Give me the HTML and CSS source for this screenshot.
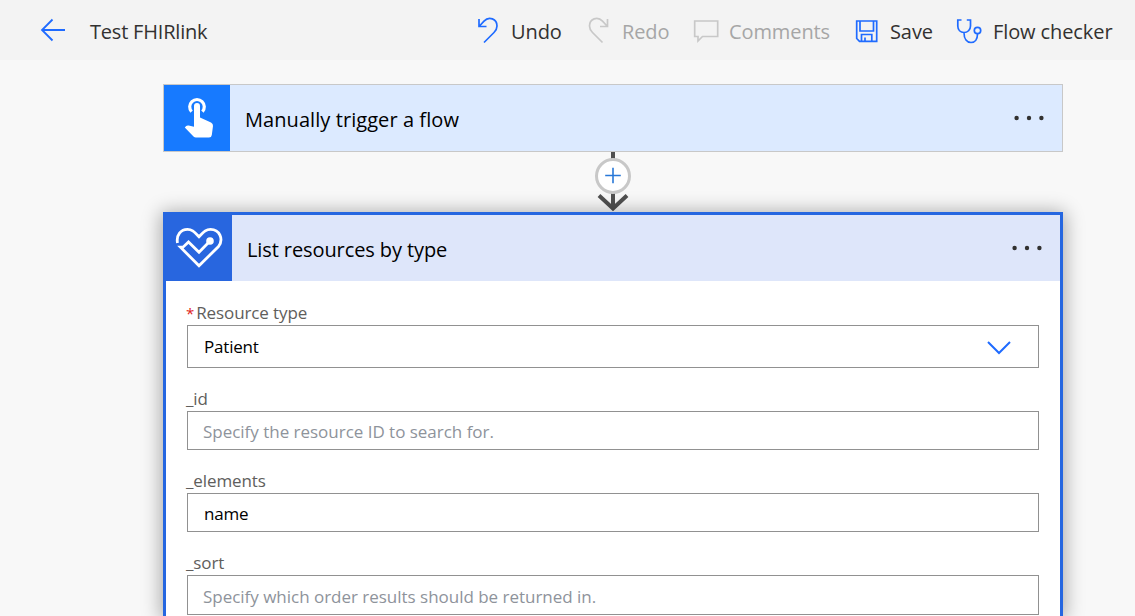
FILE: index.html
```html
<!DOCTYPE html>
<html lang="en">
<head>
    <meta charset="UTF-8">
    <meta name="viewport" content="width=device-width, initial-scale=1.0">
    <title>Test FHIRlink</title>
    <link rel="stylesheet" href="styles.css">
</head>
<body>
    <header class="topbar">
        <svg class="back-icon" width="26" height="24" viewBox="0 0 26 24">
            <path d="M25 12H2M12.500 1.500L2 12l10.500 10.500"/>
        </svg>
        <h1 class="flow-name">Test FHIRlink</h1>

        <nav class="toolbar">
            <div class="tool undo">
                <svg class="tool-icon" width="26" height="28" viewBox="0 0 26 28">
                    <path d="M2 3v7.500h7.500M2.500 10l4.500-4.800C12-.3 20 3 20 10c0 3-1.300 4.800-3 6.500L7 26.500"/>
                </svg>
                <span>Undo</span>
            </div>
            <div class="tool redo disabled">
                <svg class="tool-icon" width="26" height="28" viewBox="0 0 26 28">
                    <path d="M19.500 3v7.500H12M19 10l-4.500-4.800C9.500-.3 1.500 3 1.500 10c0 3 1.300 4.800 3 6.500l10 10"/>
                </svg>
                <span>Redo</span>
            </div>
            <div class="tool comments disabled">
                <svg class="tool-icon" width="26" height="28" viewBox="0 0 26 28">
                    <path d="M1.700 5h23v15.500H9.500L5 25v-4.500H1.700z"/>
                </svg>
                <span>Comments</span>
            </div>
            <div class="tool save">
                <svg class="tool-icon" width="26" height="28" viewBox="0 0 26 28">
                    <path d="M1.700 5h20v20.300H4.500L1.700 22.500zM5 5v10h13.500V5M6.500 25v-6.500h10.300V25M10 25v-3.500"/>
                </svg>
                <span>Save</span>
            </div>
            <div class="tool checker">
                <svg class="tool-icon" width="26" height="28" viewBox="0 0 26 28">
                    <path d="M5.500 4H1.800v6c0 4 2.700 6.500 6.200 6.500s6.500-2.500 6.500-6.500V4h-3.700M8 16.500c0 6.500 3 10 7 10s6.500-3.500 6.500-8.500"/>
                    <circle cx="21.500" cy="14.500" r="3.200"/>
                </svg>
                <span>Flow checker</span>
            </div>
        </nav>
    </header>

    <main class="canvas">
        <section class="card trigger">
            <div class="card-header">
                <div class="card-icon">
                    <svg width="66" height="66" viewBox="0 0 66 66">
                        <path class="touch-ring" d="M27.600 26.700a7.300 7.300 0 1 1 10.800 0"/>
                        <path class="touch-hand" d="M30 21a3 3 0 0 1 6 0V32.500l11 5q2.200 1 2 3.500l-1.200 9q-.3 2.500-2.800 2.500H32q-1.500 0-2.500-1L20.800 42.500l1.400-1.500q1-.9 2.500-.5l5.300 1.300z"/>
                    </svg>
                </div>
                <h2 class="card-title">Manually trigger a flow</h2>
                <svg class="dots" width="30" height="6" viewBox="0 0 30 6">
                    <circle cx="2.600" cy="3" r="2.200"/><circle cx="15" cy="3" r="2.200"/><circle cx="27.400" cy="3" r="2.200"/>
                </svg>
            </div>
        </section>

        <svg class="connector" width="40" height="60" viewBox="0 0 40 60">
            <path class="line" d="M20 0v56M6 43.500l14 13 14-13"/>
            <circle cx="20" cy="24" r="16.500"/>
            <path class="plus" d="M12.200 23.500h15.600M20 15.700v15.600"/>
        </svg>

        <section class="card action">
            <div class="card-header">
                <div class="card-icon">
                    <svg width="66" height="66" viewBox="0 0 66 66">
                        <path class="heart" d="M11.500 28c-1.500-8 3.500-13.700 10-13.700 4 0 6 1.500 11.500 7.500 5.500-6 7.500-7.500 11.500-7.500 9 0 13.500 9.700 8 17.200L33 50.800 14.500 32.200h2.500l5.500-5.200L33 37.200 44 26"/>
                        <circle cx="44" cy="26" r="3.800"/>
                    </svg>
                </div>
                <h2 class="card-title">List resources by type</h2>
                <svg class="dots" width="30" height="6" viewBox="0 0 30 6">
                    <circle cx="2.600" cy="3" r="2.200"/><circle cx="15" cy="3" r="2.200"/><circle cx="27.400" cy="3" r="2.200"/>
                </svg>
            </div>

            <div class="card-body">
                <div class="field">
                    <div class="label"><span class="star">*</span>Resource type</div>
                    <div class="input select">
                        <span>Patient</span>
                        <svg class="chevron" width="26" height="16" viewBox="0 0 26 16">
                            <path d="M2 3l11 11L24 3"/>
                        </svg>
                    </div>
                </div>
                <div class="field">
                    <div class="label">_id</div>
                    <div class="input placeholder">Specify the resource ID to search for.</div>
                </div>
                <div class="field">
                    <div class="label">_elements</div>
                    <div class="input">name</div>
                </div>
                <div class="field last">
                    <div class="label">_sort</div>
                    <div class="input placeholder">Specify which order results should be returned in.</div>
                </div>
            </div>
        </section>
    </main>
</body>
</html>
```
FILE: styles.css
```css
* {
    box-sizing: border-box;
}
body {
    margin: 0;
    background: #f8f8f8;
    color: #323130;
    font-family: "Open Sans", "Noto Sans", sans-serif;
}
svg {
    display: block;
    flex: none;
    fill: none;
}
h1, h2 {
    margin: 0;
    font-weight: normal;
}

/* top bar */
.topbar {
    display: flex;
    align-items: center;
    height: 60px;
    padding-left: 40px;
    background: #f3f3f3;
    white-space: nowrap;
}
.back-icon {
    stroke: #1f6bff;
    stroke-width: 1.8;
}
.flow-name {
    width: 387px;
    margin-left: 24px;
    padding-top: 2px;
    font-size: 20px;
    letter-spacing: -0.2px;
}
.toolbar {
    display: flex;
}
.tool {
    display: flex;
    align-items: center;
    gap: 8px;
    font-size: 20px;
    letter-spacing: -0.1px;
}
.tool span {
    padding-top: 2px;
}
.tool-icon {
    stroke: #1f6bff;
    stroke-width: 1.7;
}
.undo { width: 111px; }
.redo { width: 105px; }
.comments { width: 162px; gap: 10px; }
.save { width: 101px; gap: 9px; }
.checker { gap: 11px; }
.disabled {
    color: #a6a6a6;
}
.disabled .tool-icon {
    stroke: #c8c8c8;
}

/* flow cards */
.canvas {
    display: flex;
    flex-direction: column;
    align-items: center;
    width: 900px;
    margin: 24px 0 0 163px;
}
.card {
    width: 900px;
}
.card-header {
    display: flex;
    align-items: center;
    height: 66px;
    padding-right: 18px;
}
.card-icon {
    width: 66px;
    height: 66px;
}
.card-title {
    flex: 1;
    padding: 3px 0 0 15px;
    color: #000;
    font-size: 20px;
    letter-spacing: 0.07px;
}
.dots {
    fill: #323130;
}
.trigger {
    border: 1px solid #c8c8c8;
    background: #dceaff;
}
.trigger .card-icon {
    background: #177aff;
}
.touch-ring {
    stroke: #fff;
    stroke-width: 3.2;
}
.touch-hand {
    fill: #fff;
}
.connector .line {
    stroke: #505050;
    stroke-width: 4;
}
.connector circle {
    fill: #fff;
    stroke: #c8c8c8;
    stroke-width: 3;
}
.connector .plus {
    stroke: #2878d8;
    stroke-width: 1.6;
}
.action {
    height: 404px;
    border: 3px solid #2566e0;
    border-bottom: 0;
    background: #fff;
    box-shadow: 0 2px 18px 2px rgba(0, 0, 0, 0.33);
}
.action .card-header {
    background: #dee6fa;
}
.action .card-icon {
    background: #2866df;
}
.action .card-title {
    letter-spacing: -0.1px;
}
.heart {
    stroke: #fff;
    stroke-width: 2.8;
}
.card-icon circle {
    fill: #fff;
}

/* parameters */
.card-body {
    padding: 19px 21px 0;
}
.field {
    margin-bottom: 18px;
}
.label {
    height: 25px;
    margin-left: -1px;
    line-height: 26px;
    color: #605e5c;
    font-size: 17px;
    letter-spacing: -0.1px;
}
.star {
    margin-right: 2px;
    color: #e02020;
    font-size: 15px;
}
.input {
    display: flex;
    align-items: center;
    justify-content: space-between;
    height: 39px;
    padding: 1px 26px 0 16px;
    border: 1px solid #919191;
    color: #000;
    font-size: 17px;
    letter-spacing: -0.2px;
}
.select {
    height: 43px;
    padding-top: 0;
}
.placeholder {
    padding-left: 15px;
    color: #8e939b;
    letter-spacing: -0.02px;
}
.last {
    margin-bottom: 0;
}
.last .input {
    height: 40px;
    padding-top: 2px;
}
.chevron {
    stroke: #1f6bff;
    stroke-width: 2;
}
```
